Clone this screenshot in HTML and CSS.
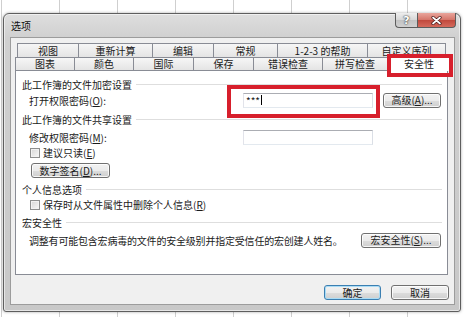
FILE: index.html
```html
<!DOCTYPE html>
<html lang="zh-CN">
<head>
  <meta charset="UTF-8">
  <title>选项</title>
  <link rel="stylesheet" href="styles.css">
</head>
<body>

<div class="window">
  <div class="titlebar">
    <div class="title">选项</div>
    <div class="caption-buttons">
      <div class="cap-btn help-btn">?</div>
      <div class="cap-btn close-btn">
        <svg width="11" height="9" viewBox="0 0 11 9">
          <path d="M2 1.5l7 6M9 1.5l-7 6" stroke="#4a1a1a" stroke-width="3.2" stroke-linecap="round"/>
          <path d="M2 1.5l7 6M9 1.5l-7 6" stroke="#fff" stroke-width="1.7" stroke-linecap="round"/>
        </svg>
      </div>
    </div>
  </div>

  <div class="client">
    <div class="tab-row back-row">
      <div class="tab">视图</div>
      <div class="tab">重新计算</div>
      <div class="tab">编辑</div>
      <div class="tab">常规</div>
      <div class="tab">1-2-3 的帮助</div>
      <div class="tab">自定义序列</div>
    </div>
    <div class="tab-row front-row">
      <div class="tab">图表</div>
      <div class="tab">颜色</div>
      <div class="tab">国际</div>
      <div class="tab">保存</div>
      <div class="tab">错误检查</div>
      <div class="tab">拼写检查</div>
      <div class="tab selected">安全性</div>
    </div>

    <div class="panel">
      <div class="group-head"><span>此工作簿的文件加密设置</span><div class="line"></div></div>
      <div class="field-row">
        <div class="label">打开权限密码(<u>O</u>):</div>
        <div class="textbox">***<span class="caret"></span></div>
        <div class="btn btn-adv">高级(<u>A</u>)...</div>
      </div>

      <div class="group-head gap3"><span>此工作簿的文件共享设置</span><div class="line"></div></div>
      <div class="field-row gap2">
        <div class="label">修改权限密码(<u>M</u>):</div>
        <div class="textbox"></div>
      </div>
      <div class="check-row">
        <div class="check"></div>
        <span>建议只读(<u>E</u>)</span>
      </div>
      <div class="btn btn-sign">数字签名(<u>D</u>)...</div>

      <div class="group-head gap3"><span>个人信息选项</span><div class="line"></div></div>
      <div class="check-row">
        <div class="check"></div>
        <span>保存时从文件属性中删除个人信息(<u>R</u>)</span>
      </div>

      <div class="group-head gap2"><span>宏安全性</span><div class="line"></div></div>
      <div class="macro-row">
        <div class="macro-text">调整有可能包含宏病毒的文件的安全级别并指定受信任的宏创建人姓名。</div>
        <div class="btn btn-macro">宏安全性(<u>S</u>)...</div>
      </div>
    </div>

    <div class="dialog-buttons">
      <div class="btn btn-ok">确定</div>
      <div class="btn btn-cancel">取消</div>
    </div>
  </div>
</div>

<!-- red marks drawn over the screenshot -->
<div class="mark mark-tab"></div>
<div class="mark mark-pass"></div>

</body>
</html>
```

FILE: styles.css
```css
body {
  margin: 0;
  width: 464px;
  height: 317px;
  overflow: hidden;
  position: relative;
  font-family: "Noto Sans CJK SC", "Liberation Sans", sans-serif;
  font-size: 10px;
  color: #1a1a1a;
  background-color: #fff;
  background-image: linear-gradient(to right, #cfcfcf 1px, transparent 1px);
  background-size: 58px 100%;
  background-position: 1px 0;
}
.window {
  margin: 13px 0 0 3px;
  width: 458px;
  height: 299px;
  box-sizing: border-box;
  border: 1px solid #5e5e5e;
  border-radius: 6px 6px 3px 3px;
  padding: 0 5px 6px 6px;
  background: linear-gradient(to bottom, #dedede 0, #d0d0d0 24px, #c8c8c8 100%);
  box-shadow: inset 0 0 0 1px rgba(255,255,255,0.55), 0 0 3px rgba(0,0,0,0.35);
  display: flex;
  flex-direction: column;
}
.titlebar {
  height: 23px;
  display: flex;
  justify-content: space-between;
}
.title {
  align-self: center;
  padding-left: 1px;
  font-size: 10px;
  color: #111;
}
.caption-buttons {
  display: flex;
  margin-top: -1px;
  margin-right: -1px;
}
.cap-btn {
  height: 15px;
  box-sizing: border-box;
  border: 1px solid #5c5c5c;
  border-top: none;
  display: flex;
  align-items: center;
  justify-content: center;
}
.help-btn {
  width: 22px;
  border-right: none;
  border-radius: 0 0 0 4px;
  background: linear-gradient(to bottom, #eeeeee 0, #d6d6d6 50%, #c2c2c2 51%, #d0d0d0 100%);
  color: #fff;
  font-family: "DejaVu Sans", sans-serif;
  font-weight: bold;
  font-size: 11px;
  text-shadow: 0 0 2px #333, 0 0 1px #333;
}
.close-btn {
  width: 39px;
  border-radius: 0 0 4px 0;
  background: linear-gradient(to bottom, #e9a59c 0, #d47468 50%, #c0483c 51%, #d56a5c 100%);
}
.client {
  height: 268px;
  box-sizing: border-box;
  border: 1px solid #9c9c9c;
  background-color: #f0f0f0;
}
.tab-row {
  display: grid;
}
.back-row {
  margin: 5px 0 0 6px;
  grid-template-columns: 61px 74px 61px 64px 90px 79px;
  grid-template-rows: 14px;
}
.front-row {
  margin-left: 4px;
  grid-template-columns: 59px 59px 60px 60px 69px 65px 64px;
  grid-template-rows: 13px;
}
.tab {
  box-sizing: border-box;
  border-top: 1px solid #898c95;
  border-left: 1px solid #898c95;
  background: linear-gradient(to bottom, #f6f6f6, #e4e4e4);
  display: flex;
  align-items: center;
  justify-content: center;
  line-height: 1;
  white-space: nowrap;
}
.tab:last-child {
  border-right: 1px solid #898c95;
}
.tab.selected {
  margin-top: -2px;
  height: 16px;
  padding-top: 1px;
  background: #fff;
  position: relative;
  z-index: 1;
}
.panel {
  margin-left: 4px;
  width: 433px;
  height: 205px;
  box-sizing: border-box;
  border: 1px solid #898c95;
  background-color: #fff;
  padding: 5px 5px 0 6px;
}
.group-head {
  height: 16px;
  display: flex;
  align-items: center;
}
.group-head .line {
  flex: 1;
  height: 1px;
  margin-left: 4px;
  background-color: #dedede;
}
.gap2 { margin-top: 2px; }
.gap3 { margin-top: 3px; }
.field-row {
  height: 16px;
  display: flex;
  align-items: center;
}
.label {
  width: 221px;
  box-sizing: border-box;
  padding-left: 7px;
}
.textbox {
  width: 130px;
  height: 15px;
  box-sizing: border-box;
  border: 1px solid #abadb3;
  border-color: #abadb3 #dbdfe6 #e3e9ef #e2e3ea;
  background: #fff;
  padding-left: 2px;
  font-size: 10px;
  line-height: 13px;
  display: flex;
  align-items: center;
}
.caret {
  display: inline-block;
  width: 1px;
  height: 10px;
  margin-left: 1px;
  background-color: #000;
}
.btn {
  height: 15px;
  box-sizing: border-box;
  border: 1px solid #707070;
  border-radius: 3px;
  background: linear-gradient(to bottom, #f2f2f2 0, #ebebeb 50%, #dddddd 51%, #cfcfcf 100%);
  box-shadow: inset 0 0 0 1px rgba(255,255,255,0.8);
  display: flex;
  align-items: center;
  justify-content: center;
  line-height: 1;
  white-space: nowrap;
}
.btn-adv {
  width: 58px;
  margin-left: 10px;
}
.check-row {
  height: 15px;
  display: flex;
  align-items: center;
  padding-left: 8px;
  gap: 3px;
}
.check {
  width: 10px;
  height: 10px;
  box-sizing: border-box;
  border: 1px solid #8e8f8f;
  background: linear-gradient(135deg, #d6d6d6, #f8f8f8);
  box-shadow: inset 0 0 0 1px #f2f2f2;
}
.btn-sign {
  width: 79px;
  margin: 3px 0 0 9px;
}
.macro-row {
  height: 16px;
  margin-top: 2px;
  display: flex;
  align-items: center;
}
.macro-text {
  padding-left: 7px;
  letter-spacing: -0.2px;
  white-space: nowrap;
}
.btn-macro {
  width: 80px;
  margin-left: auto;
  margin-right: 1px;
}
.dialog-buttons {
  margin-top: 10px;
  padding-right: 5px;
  display: flex;
  justify-content: flex-end;
  gap: 10px;
}
.btn-ok {
  width: 57px;
  border-color: #3c7fb1;
  box-shadow: inset 0 0 0 1px #a9dcf6;
}
.btn-cancel {
  width: 58px;
}
.mark {
  position: absolute;
  box-sizing: border-box;
  border: 4px solid #d71f2c;
  z-index: 5;
}
.mark-tab {
  left: 387px;
  top: 54px;
  width: 66px;
  height: 23px;
}
.mark-pass {
  left: 227px;
  top: 85px;
  width: 153px;
  height: 33px;
}
```
